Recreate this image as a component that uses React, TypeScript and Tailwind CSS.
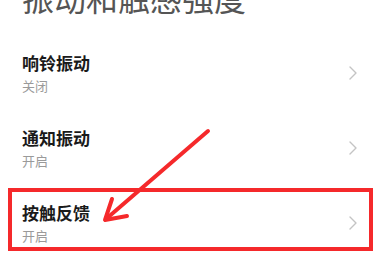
import React from "react";

const items = [
  { title: "响铃振动", sub: "关闭" },
  { title: "通知振动", sub: "开启" },
  { title: "按触反馈", sub: "开启" },
];

function Chevron() {
  return (
    <svg width="10" height="16" viewBox="0 0 10 16" className="shrink-0">
      <path d="M2 2 L8 8 L2 14" fill="none" stroke="#c4c4c4" strokeWidth="1.4" strokeLinecap="round" strokeLinejoin="round" />
    </svg>
  );
}

export default function App() {
  return (
    <div
      className="relative w-[386px] h-[253px] overflow-hidden bg-white"
      style={{ fontFamily: '"Noto Sans CJK SC", "Noto Sans", sans-serif' }}
    >
      <div className="mt-[-19px] pl-[22px] text-[32px] leading-[32px] text-[#555555]">
        振动和触感强度
      </div>
      <div className="mt-[22px] flex flex-col">
        {items.map((it) => (
          <div key={it.title} className="flex items-center h-[75px] pl-[22px] pr-[28px]">
            <div className="flex-1 flex flex-col">
              <div className="text-[17px] leading-[22px] font-semibold text-[#1a1a1a]">{it.title}</div>
              <div className="text-[13px] leading-[16px] text-[#9a9a9a] mt-[4px]">{it.sub}</div>
            </div>
            <Chevron />
          </div>
        ))}
      </div>
      <div className="absolute left-[8px] top-[188px] w-[365px] h-[63px] border-[4px] border-[#f5292b]" />
      <svg className="absolute left-0 top-0" width="386" height="253" viewBox="0 0 386 253">
        <g stroke="#f5292b" strokeWidth="4" strokeLinecap="round" fill="none">
          <line x1="208" y1="131" x2="106" y2="219" />
          <polyline points="112,199 105,220 127,216" strokeLinejoin="round" />
        </g>
      </svg>
    </div>
  );
}
